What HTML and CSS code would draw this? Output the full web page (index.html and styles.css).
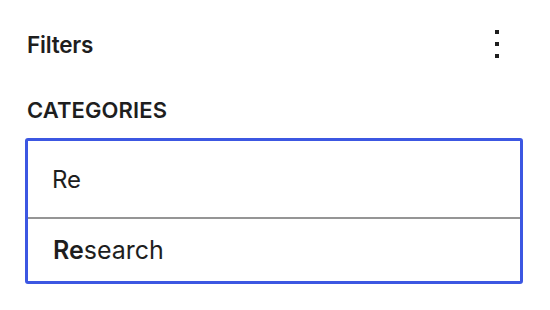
FILE: index.html
```html
<!DOCTYPE html>
<html>
<head>
<meta charset="utf-8">
<link rel="stylesheet" href="styles.css">
</head>
<body>
<div class="panel">
  <div class="header">
    <h2 class="title">Filters</h2>
    <button class="menu" aria-label="Options">
      <svg width="12" height="32" viewBox="0 0 12 32"><rect x="4" y="2" width="4" height="4"/><rect x="4" y="14" width="4" height="4"/><rect x="4" y="26" width="4" height="4"/></svg>
    </button>
  </div>
  <div class="label">CATEGORIES</div>
  <div class="combo">
    <div class="input">Re</div>
    <div class="option"><b>Re</b>search</div>
  </div>
</div>
</body>
</html>
```
FILE: styles.css
```css
html, body { margin: 0; padding: 0; background: #fff; }
body { font-family: Inter, "Noto Sans", sans-serif; color: #1e1e1e; }
.panel { width: 550px; height: 310px; box-sizing: border-box; padding: 26px 27px 0 25px; }
.header { display: flex; align-items: center; justify-content: space-between; height: 36px; padding-left: 2px; }
.title { margin: 0; font-size: 22.5px; font-weight: 600; letter-spacing: -0.2px; }
.menu { border: 0; background: none; padding: 0; margin-right: 20px; display: flex; }
.menu svg { fill: #1e1e1e; }
.label { margin-top: 35px; padding-left: 2px; font-size: 22px; font-weight: 600; line-height: 26px; letter-spacing: 0.1px; }
.combo { margin-top: 15px; border: 3px solid #3c57e2; border-radius: 3px; }
.input { height: 78px; box-sizing: border-box; padding: 0 0 0 24px; display: flex; align-items: center; font-size: 24px; border-bottom: 2px solid #959595; }
.option { height: 62px; box-sizing: border-box; padding-left: 25px; display: flex; align-items: center; font-size: 25px; }
.option b { font-weight: 600; }
```
